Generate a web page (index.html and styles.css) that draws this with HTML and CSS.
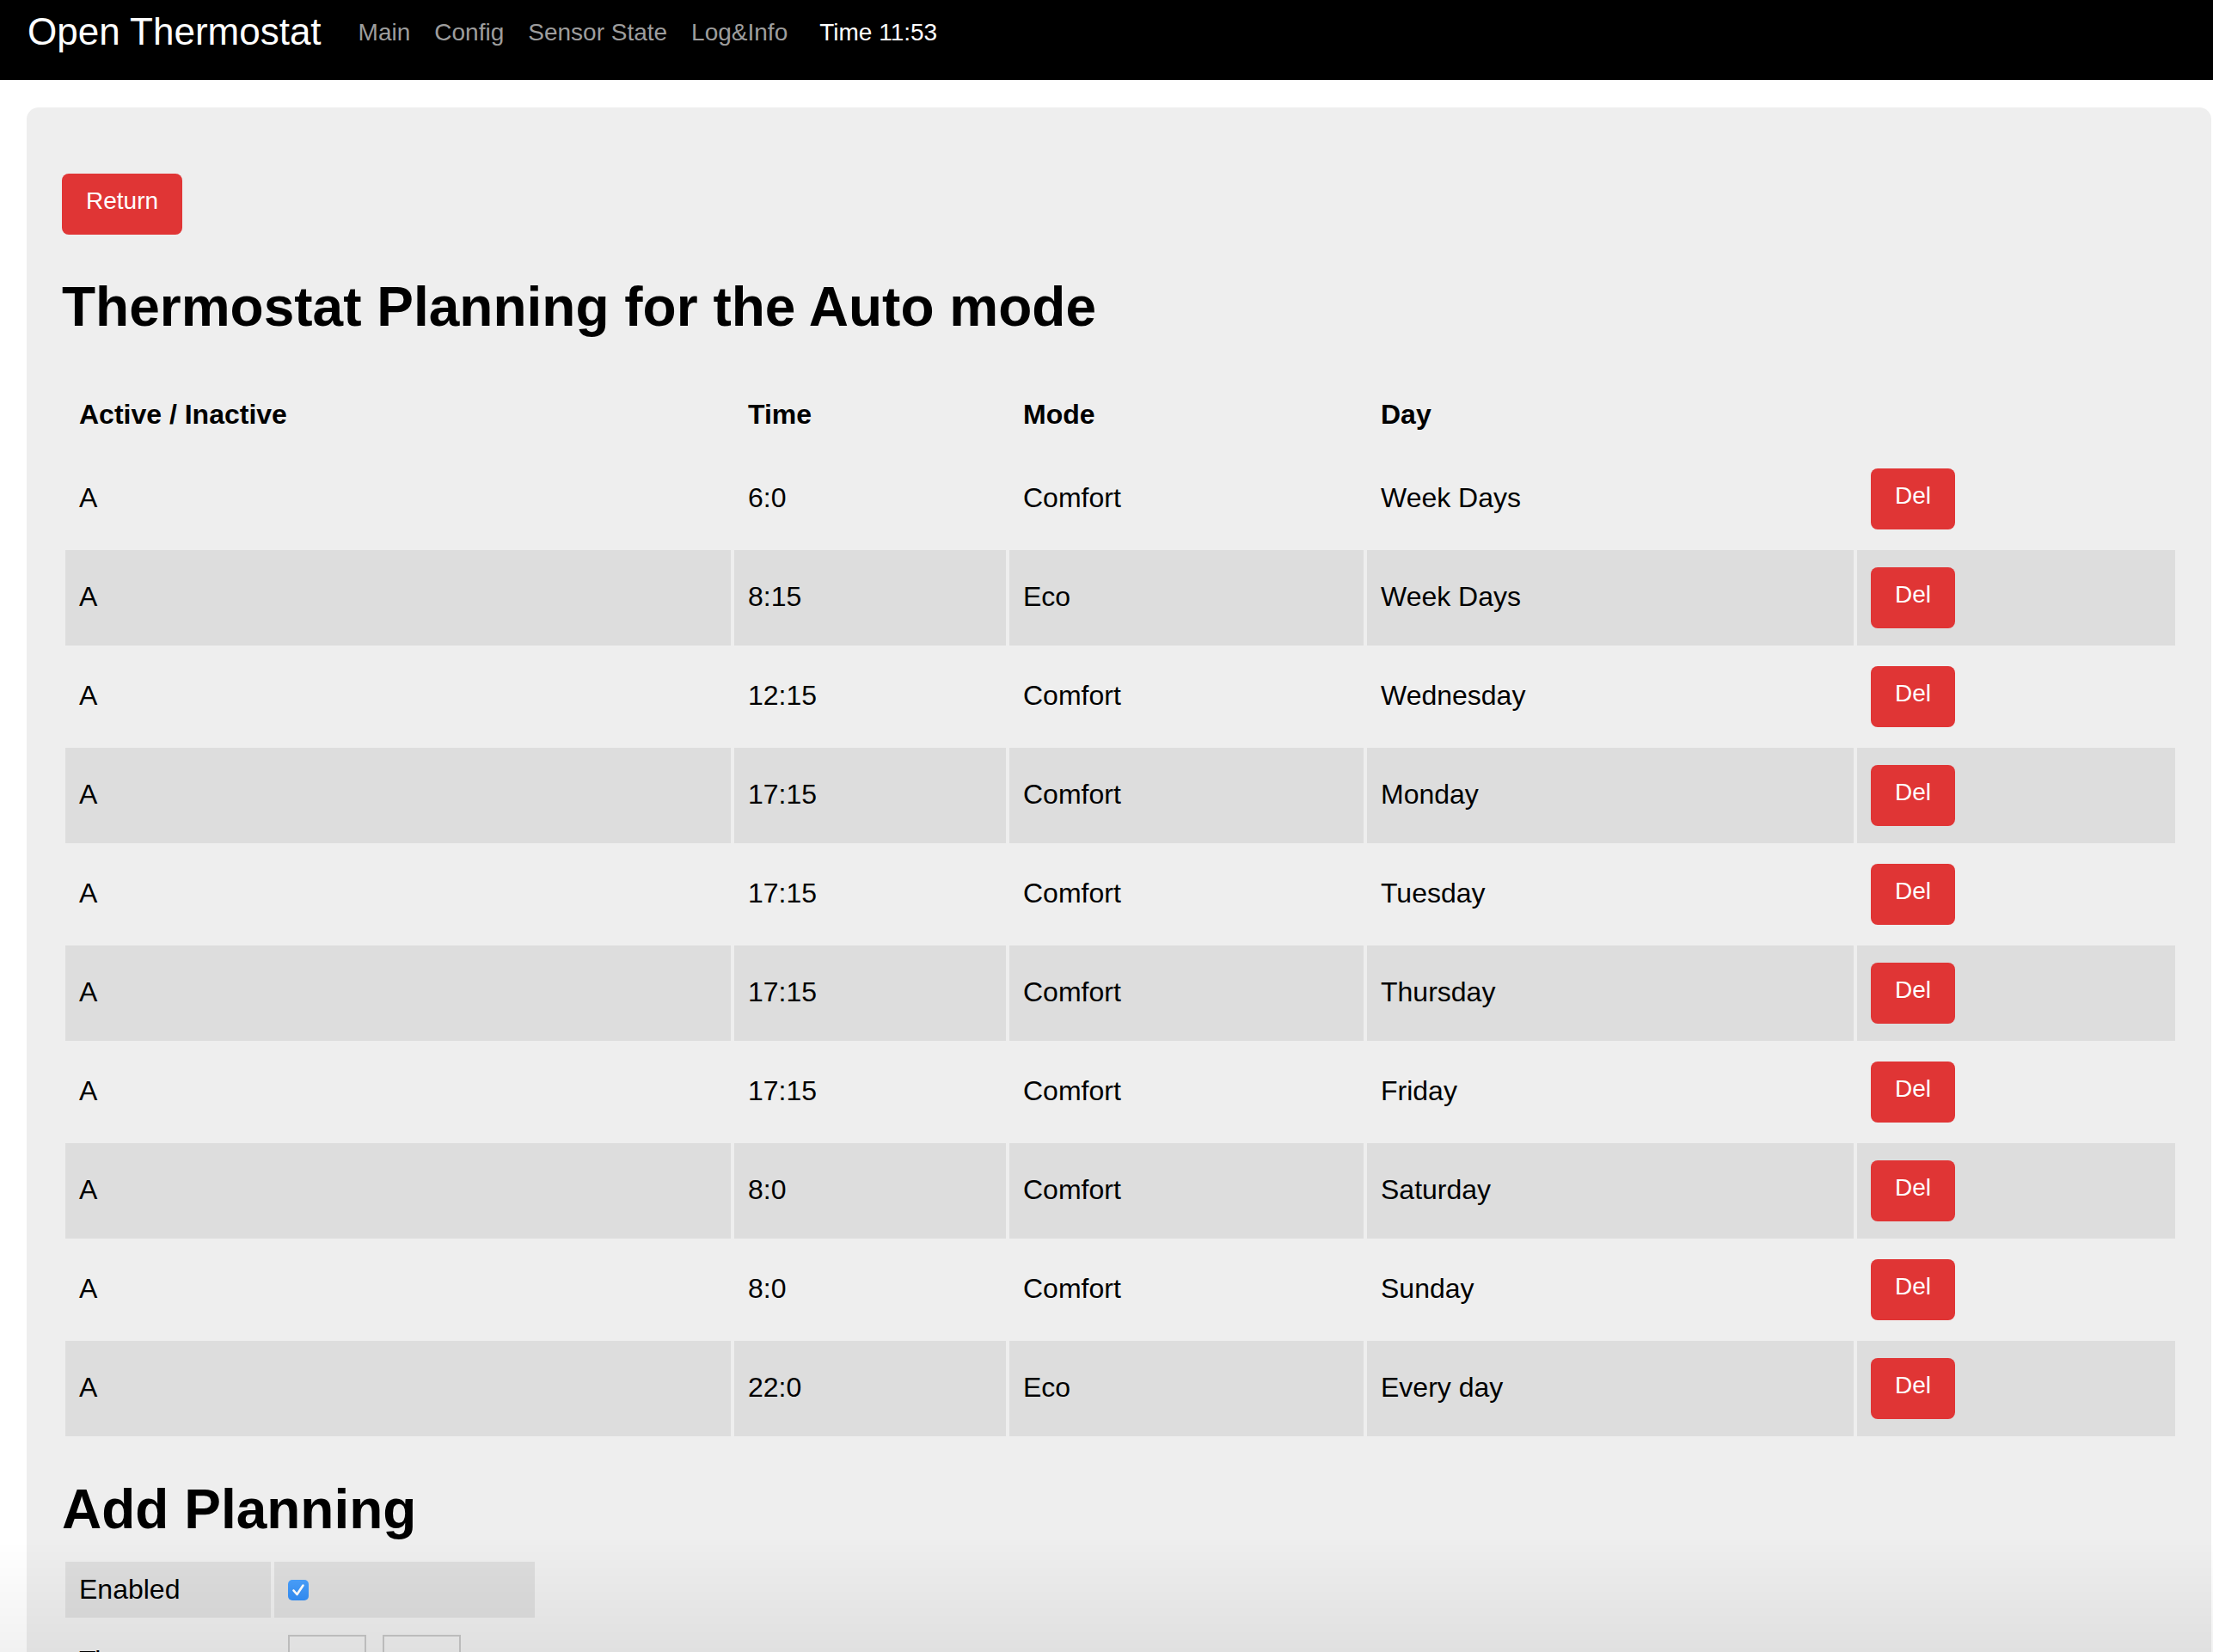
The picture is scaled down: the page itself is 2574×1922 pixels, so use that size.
FILE: index.html
```html
<!DOCTYPE html>
<html lang="en">
<head>
<meta charset="utf-8">
<title>Open Thermostat - Planning</title>
<link rel="stylesheet" href="styles.css">
</head>
<body>
<nav class="topbar">
  <span class="brand">Open Thermostat</span>
  <ul class="nav-links">
    <li>Main</li>
    <li>Config</li>
    <li>Sensor State</li>
    <li>Log&amp;Info</li>
  </ul>
  <span class="clock">Time 11:53</span>
</nav>

<main class="card">
  <button class="btn">Return</button>
  <h1 class="title">Thermostat Planning for the Auto mode</h1>

  <table class="plan">
    <colgroup>
      <col class="c-active">
      <col class="c-time">
      <col class="c-mode">
      <col class="c-day">
      <col class="c-del">
    </colgroup>
    <thead>
      <tr><th>Active / Inactive</th><th>Time</th><th>Mode</th><th>Day</th><th></th></tr>
    </thead>
    <tbody>
      <tr><td>A</td><td>6:0</td><td>Comfort</td><td>Week Days</td><td><button class="btn">Del</button></td></tr>
      <tr><td>A</td><td>8:15</td><td>Eco</td><td>Week Days</td><td><button class="btn">Del</button></td></tr>
      <tr><td>A</td><td>12:15</td><td>Comfort</td><td>Wednesday</td><td><button class="btn">Del</button></td></tr>
      <tr><td>A</td><td>17:15</td><td>Comfort</td><td>Monday</td><td><button class="btn">Del</button></td></tr>
      <tr><td>A</td><td>17:15</td><td>Comfort</td><td>Tuesday</td><td><button class="btn">Del</button></td></tr>
      <tr><td>A</td><td>17:15</td><td>Comfort</td><td>Thursday</td><td><button class="btn">Del</button></td></tr>
      <tr><td>A</td><td>17:15</td><td>Comfort</td><td>Friday</td><td><button class="btn">Del</button></td></tr>
      <tr><td>A</td><td>8:0</td><td>Comfort</td><td>Saturday</td><td><button class="btn">Del</button></td></tr>
      <tr><td>A</td><td>8:0</td><td>Comfort</td><td>Sunday</td><td><button class="btn">Del</button></td></tr>
      <tr><td>A</td><td>22:0</td><td>Eco</td><td>Every day</td><td><button class="btn">Del</button></td></tr>
    </tbody>
  </table>

  <h1 class="subtitle">Add Planning</h1>
  <table class="add">
    <colgroup>
      <col class="c-label">
      <col class="c-field">
    </colgroup>
    <tbody>
      <tr class="shaded">
        <td>Enabled</td>
        <td><span class="check"><svg viewBox="0 0 24 24" width="24" height="24"><path d="M6.5 12.5 L10.5 17 L17.5 6.5" fill="none" stroke="#fff" stroke-width="2.6" stroke-linecap="round" stroke-linejoin="round"/></svg></span></td>
      </tr>
      <tr>
        <td>Time</td>
        <td><div class="time-inputs"><input class="num" type="text" value=""><input class="num" type="text" value=""></div></td>
      </tr>
      <tr class="shaded">
        <td>Mode</td>
        <td>Comfort</td>
      </tr>
      <tr>
        <td>Day</td>
        <td>Every day</td>
      </tr>
    </tbody>
  </table>
</main>
</body>
</html>
```

FILE: styles.css
```css
html, body {
  margin: 0;
  padding: 0;
  background: #fff;
  color: #000;
  font-family: "Liberation Sans", Helvetica, Arial, sans-serif;
}

body::after {
  content: "";
  position: fixed;
  left: 0;
  right: 0;
  bottom: 0;
  height: 130px;
  background: linear-gradient(to bottom, rgba(0, 0, 0, 0), rgba(0, 0, 0, 0.055));
  pointer-events: none;
}

/* ---------- top bar ---------- */
.topbar {
  display: flex;
  align-items: flex-start;
  height: 93px;
  box-sizing: border-box;
  background: #000;
  padding-left: 32px;
}

.brand {
  font-size: 44px;
  line-height: 50px;
  margin-top: 12px;
  color: #fff;
}

.nav-links {
  display: flex;
  gap: 28px;
  list-style: none;
  margin: 22px 0 0 43px;
  padding: 0;
  font-size: 28px;
  line-height: 32px;
  color: #9d9d9d;
}

.clock {
  margin: 22px 0 0 37px;
  font-size: 28px;
  line-height: 32px;
  color: #fff;
}

/* ---------- card ---------- */
.card {
  margin: 32px 2px 0 31px;
  padding: 77px 38px 60px 41px;
  background: #eee;
  border-radius: 14px 14px 0 0;
}

.btn {
  display: block;
  height: 71px;
  box-sizing: border-box;
  padding: 0 28px 7px;
  border: 0;
  border-radius: 8px;
  background: #e03535;
  color: #fff;
  font-family: "Liberation Sans", Helvetica, Arial, sans-serif;
  font-size: 28px;
  line-height: 64px;
}

.title,
.subtitle {
  font-size: 64px;
  line-height: 70px;
  font-weight: bold;
}

.title {
  margin: 49px 0 47px;
}

.subtitle {
  margin: 46px 0 22px;
}

/* ---------- planning table ---------- */
.plan,
.add {
  border-collapse: separate;
  border-spacing: 4px;
  table-layout: fixed;
  font-size: 32px;
}

.plan {
  width: 100%;
}

.c-active { width: 774px; }
.c-time { width: 316px; }
.c-mode { width: 412px; }
.c-day { width: 566px; }

.plan th {
  text-align: left;
  font-weight: bold;
  vertical-align: bottom;
  padding: 17px 16px 16px;
  line-height: 45px;
}

.plan td {
  height: 108px;
  padding: 0 16px 3px;
  line-height: 45px;
  vertical-align: middle;
}

.plan td .btn {
  margin-top: 3px;
}

.plan tbody tr:nth-child(even) td {
  background: #ddd;
}

/* ---------- add table ---------- */
.add {
  width: 554px;
}

.c-label { width: 238px; }
.c-field { width: 302px; }

.add td {
  height: 65px;
  padding: 0 16px;
  line-height: 45px;
  vertical-align: middle;
}

.add tr.shaded td {
  background: #ddd;
}

.check {
  display: block;
  width: 24px;
  height: 24px;
  border-radius: 5px;
  background: linear-gradient(#4aa0fb, #338df5);
}

.check svg {
  display: block;
}

.time-inputs {
  display: flex;
  gap: 19px;
  padding: 16px 0;
}

.num {
  width: 91px;
  height: 60px;
  box-sizing: border-box;
  border: 2px solid #c6c6c6;
  background: #eee;
  font-family: "Liberation Sans", Helvetica, Arial, sans-serif;
  font-size: 28px;
  padding: 0 8px;
}
```
